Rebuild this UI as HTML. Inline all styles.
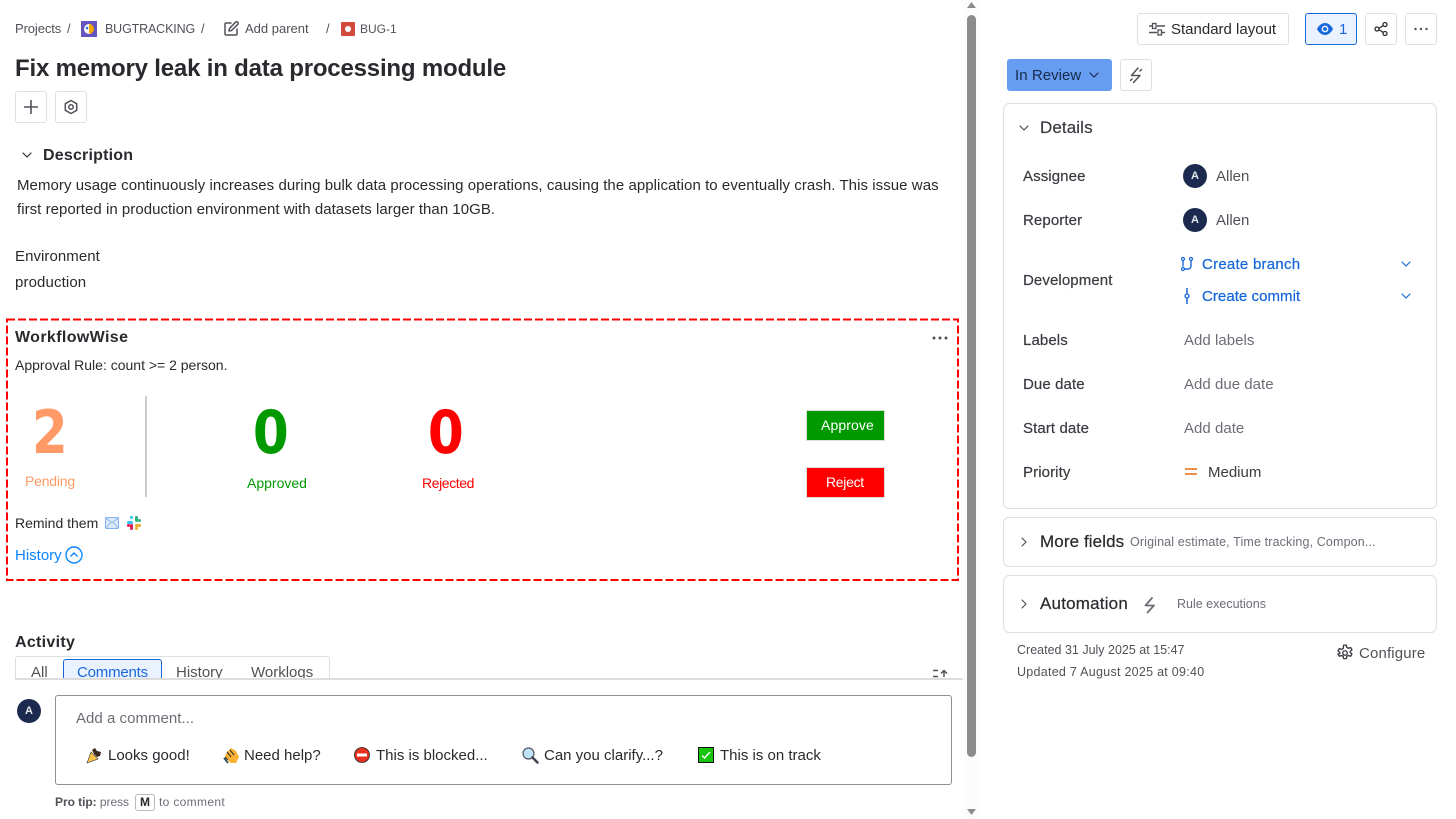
<!DOCTYPE html>
<html lang="en"><head><meta charset="utf-8"><title>BUG-1</title>
<style>
html,body{margin:0;padding:0;background:#fff;width:1456px;height:819px;overflow:hidden}
body{position:relative;font-family:"Liberation Sans",sans-serif;color:#292a2e}
.t{position:absolute;white-space:nowrap;line-height:20px;height:20px;font-size:15px;letter-spacing:0;margin-top:1px}
.t.bc,.t.h,.t.w,.t.d,.t.k,.t[style*="font-size"]{margin-top:0}
.b{position:absolute;box-sizing:border-box;border:1px solid #dcdfe4;border-radius:3px;background:#fff}
.p{position:absolute;box-sizing:border-box;border:1px solid #dcdfe4;border-radius:6px;background:#fff}
svg{position:absolute;overflow:visible}
.s{fill:none;stroke:#505258;stroke-width:1.5;stroke-linecap:round;stroke-linejoin:round}
.bc{font-size:13px;color:#505258}
.h{font-weight:bold;font-size:16px;letter-spacing:.2px}
.l{color:#3a3c42;letter-spacing:.1px;-webkit-text-stroke:.2px #3a3c42}
.g{color:#6b6e76;letter-spacing:.03px}
.a{position:absolute;border-radius:50%;background:#1b2a4e;color:#e6e8ee;text-align:center;font-weight:bold;font-size:11px;line-height:25px}
.u{color:#1868db;-webkit-text-stroke:.25px #1868db}
.k{font-size:17px;letter-spacing:.1px;-webkit-text-stroke:.2px #292a2e}
.w{font-size:14px}
.d{font-family:"DejaVu Sans",sans-serif;font-weight:bold;font-size:60px;line-height:70px;height:70px;transform:scaleX(.86);transform-origin:center}
</style></head><body>

<!-- breadcrumbs -->
<div class="t bc" style="left:15px;top:19px;letter-spacing:-.1px">Projects</div>
<div class="t bc" style="left:67px;top:19px">/</div>
<svg style="left:81px;top:21px" width="16" height="16"><rect width="16" height="16" fill="#6554c0"/><path d="M3 8a5 5 0 0 1 5-5h2v10H8a5 5 0 0 1-5-5z" fill="#fff"/><path d="M8 3a5 5 0 0 1 5 5 5 5 0 0 1-5 5z" fill="#f5a800"/><circle cx="6" cy="7" r="1.300" fill="#2a6ad8"/></svg>
<div class="t bc" style="left:105px;top:19px;font-size:12.5px;letter-spacing:-.15px">BUGTRACKING</div>
<div class="t bc" style="left:201px;top:19px">/</div>
<svg style="left:224px;top:21px" width="15" height="15" viewBox="0 0 15 15"><path class="s" d="M7 2H2.200C1.500 2 1 2.500 1 3.200v9.600c0 .7.5 1.200 1.200 1.200h9.600c.7 0 1.200-.5 1.200-1.200V8M5.500 7.500L11.500 1.200a1.200 1.200 0 0 1 2.300 2.200L7.500 9.500l-2.500.5z"/></svg>
<div class="t bc" style="left:245px;top:19px">Add parent</div>
<div class="t bc" style="left:326px;top:19px">/</div>
<svg style="left:341px;top:22px" width="14" height="14"><rect width="14" height="14" rx="1" fill="#d24a3c"/><circle cx="7" cy="7" r="3" fill="#fff"/></svg>
<div class="t bc" style="left:360px;top:19px;font-size:12px">BUG-1</div>

<div class="t" style="left:15px;top:54px;height:30px;line-height:30px;font-size:24px;font-weight:bold;letter-spacing:-.19px">Fix memory leak in data processing module</div>

<div class="b" style="left:15px;top:91px;width:32px;height:32px"></div>
<svg style="left:24px;top:100px" width="14" height="14"><path d="M7 0v14M0 7h14" stroke="#505258" stroke-width="1.600"/></svg>
<div class="b" style="left:55px;top:91px;width:32px;height:32px"></div>
<svg style="left:63px;top:99px" width="16" height="16"><path class="s" d="M8 1.500l5.700 3.200v6.600L8 14.500l-5.700-3.200V4.700z"/><circle class="s" cx="8" cy="8" r="2.200"/></svg>

<!-- description -->
<svg style="left:22px;top:152px" width="10" height="6"><path class="s" style="stroke:#292a2e;stroke-width:1.200" d="M1 1l4 4 4-4"/></svg>
<div class="t h" style="left:43px;top:146px">Description</div>
<div class="t" style="left:17px;top:175px;letter-spacing:.06px">Memory usage continuously increases during bulk data processing operations, causing the application to eventually crash. This issue was</div>
<div class="t" style="left:17px;top:199px;letter-spacing:.04px">first reported in production environment with datasets larger than 10GB.</div>
<div class="t" style="left:15px;top:246px;letter-spacing:.06px">Environment</div>
<div class="t" style="left:15px;top:272px;letter-spacing:.12px">production</div>

<!-- widget -->
<svg style="left:0;top:0" width="970" height="590"><rect x="7" y="319.500" width="951" height="260.500" fill="none" stroke="#ff0000" stroke-width="2" stroke-dasharray="8 3"/></svg>
<div class="t h" style="left:15px;top:328px;letter-spacing:.37px">WorkflowWise</div>
<svg style="left:932px;top:336px" width="16" height="4"><circle cx="2" cy="2" r="1.500" fill="#505258"/><circle cx="8" cy="2" r="1.500" fill="#505258"/><circle cx="14" cy="2" r="1.500" fill="#505258"/></svg>
<div class="t w" style="left:15px;top:355px">Approval Rule: count &gt;= 2 person.</div>

<div class="t d" style="left:29px;top:398px;color:#ff9966">2</div>
<div class="t" style="left:25px;top:471px;font-size:14px;color:#ff9966;letter-spacing:-.2px">Pending</div>
<div style="position:absolute;left:145px;top:396px;width:2px;height:101px;background:#ccc"></div>
<div class="t d" style="left:250px;top:398px;color:#009900">0</div>
<div class="t" style="left:247px;top:473px;font-size:14px;color:#009900">Approved</div>
<div class="t d" style="left:425px;top:398px;color:#ff0000">0</div>
<div class="t" style="left:422px;top:473px;font-size:14px;color:#ff0000;letter-spacing:-.4px">Rejected</div>
<div style="position:absolute;left:806px;top:410px;width:77px;height:29px;border:1px solid #ddd;background:#009900"></div>
<div class="t w" style="left:821px;top:415px;color:#fff;letter-spacing:.1px">Approve</div>
<div style="position:absolute;left:806px;top:467px;width:77px;height:29px;border:1px solid #ddd;background:#ff0000"></div>
<div class="t w" style="left:826px;top:472px;color:#fff;letter-spacing:-.3px">Reject</div>

<div class="t w" style="left:15px;top:513px">Remind them</div>
<svg style="left:105px;top:517px" width="14" height="12"><rect x=".5" y=".5" width="13" height="11" rx="1" fill="#dbe9fb" stroke="#7fb2ef"/><path d="M1 1l6 5 6-5M1 11l4-5M13 11L9 6" fill="none" stroke="#7fb2ef" stroke-width=".9"/></svg>
<svg style="left:127px;top:516px" width="14" height="14"><rect x="0" y="5" width="6" height="3" rx="1.500" fill="#36c5f0"/><rect x="3" y="0" width="3" height="3" rx="1.200" fill="#36c5f0"/><rect x="8" y="0" width="3" height="6" rx="1.500" fill="#2eb67d"/><rect x="11" y="3" width="3" height="3" rx="1.200" fill="#2eb67d"/><rect x="8" y="8" width="6" height="3" rx="1.500" fill="#ecb22e"/><rect x="8" y="11" width="3" height="3" rx="1.200" fill="#ecb22e"/><rect x="3" y="8" width="3" height="6" rx="1.500" fill="#e01e5a"/><rect x="0" y="8" width="3" height="3" rx="1.200" fill="#e01e5a"/></svg>
<div class="t" style="left:15px;top:545px;color:#0a84ff">History</div>
<svg style="left:65px;top:546px" width="18" height="18"><circle cx="9" cy="9" r="8" fill="none" stroke="#0a84ff" stroke-width="1.400"/><path d="M5.500 10.500L9 7l3.500 3.500" fill="none" stroke="#0a84ff" stroke-width="1.400"/></svg>

<!-- activity -->
<div class="t h" style="left:15px;top:633px;letter-spacing:.3px">Activity</div>
<div style="position:absolute;left:15px;top:656px;width:313px;height:24px;border:1px solid #dcdfe4;border-bottom:0;border-radius:3px 3px 0 0"></div>
<div style="position:absolute;left:63px;top:659px;width:97px;height:21px;border:1px solid #1868db;border-bottom:0;border-radius:3px 3px 0 0;background:#e9f2fe"></div>
<div class="t" style="left:31px;top:662px;color:#505258">All</div>
<div class="t" style="left:77px;top:662px;color:#1868db;letter-spacing:-.2px">Comments</div>
<div class="t" style="left:176px;top:662px;color:#505258">History</div>
<div class="t" style="left:251px;top:662px;color:#505258">Worklogs</div>
<svg style="left:933px;top:669px" width="16" height="9"><path d="M0 1.500h5M0 7.500h5M11 8V2M8 4.500L11 1.500l3 3" fill="none" stroke="#505258" stroke-width="1.500"/></svg>
<div style="position:absolute;left:0;top:679px;width:963px;height:40px;background:#fff"></div>
<div style="position:absolute;left:15px;top:678px;width:948px;height:2px;background:#dddddd"></div>

<div class="a" style="left:17px;top:699px;width:24px;height:24px">A</div>
<div class="b" style="left:55px;top:695px;width:897px;height:90px;border-color:#8c8f97"></div>
<div class="t g" style="left:76px;top:708px">Add a comment...</div>

<svg style="left:86px;top:747px" width="17" height="17"><path d="M1 16L5 5l7 7z" fill="#f7c548" stroke="#333" stroke-width=".6"/><path d="M6 3l3-2 2 3 4 1-1 4-3 1-3-3z" fill="#3c2a1e"/></svg>
<div class="t" style="left:108px;top:745px">Looks good!</div>
<svg style="left:224px;top:747px" width="16" height="17"><path d="M3 5l4-4 5 3 3 6-3 6H7L3 13 1 9z" fill="#f9b234"/><path d="M3 5l4 5M6 3l4 5M1 10l3 3" stroke="#333" fill="none" stroke-width="1.100"/><path d="M0 11l4 5" stroke="#2b4a5e" stroke-width="1.800"/></svg>
<div class="t" style="left:244px;top:745px">Need help?</div>
<svg style="left:354px;top:747px" width="16" height="16"><circle cx="8" cy="8" r="7.500" fill="#e8321f" stroke="#222" stroke-width=".8"/><rect x="3" y="6.500" width="10" height="3" fill="#fff"/></svg>
<div class="t" style="left:376px;top:745px">This is blocked...</div>
<svg style="left:522px;top:747px" width="17" height="17"><circle cx="6.500" cy="6.500" r="5.500" fill="#bfe3f7" stroke="#556" stroke-width="1.200"/><path d="M10.500 10.500L15.500 15.500" stroke="#445" stroke-width="2.600" stroke-linecap="round"/></svg>
<div class="t" style="left:544px;top:745px">Can you clarify...?</div>
<svg style="left:698px;top:747px" width="16" height="16"><rect x=".5" y=".5" width="15" height="15" fill="#16c60c" stroke="#111"/><path d="M4 8.500l2.500 2.500L12 5" fill="none" stroke="#fff" stroke-width="1.400"/></svg>
<div class="t" style="left:720px;top:745px">This is on track</div>

<div class="t g" style="left:55px;top:792px;font-size:12px;letter-spacing:-.05px"><b style="color:#505258">Pro tip:</b> press</div>
<div class="b" style="left:135px;top:794px;width:20px;height:17px;border-color:#b7b9be;text-align:center;font-size:12px;line-height:15px;font-weight:bold;color:#292a2e">M</div>
<div class="t g" style="left:159px;top:792px;font-size:12px;letter-spacing:.33px">to comment</div>

<!-- scrollbar -->
<div style="position:absolute;left:964px;top:0;width:15px;height:819px;background:#fcfcfc"></div>
<div style="position:absolute;left:967px;top:15px;width:9px;height:742px;border-radius:5px;background:#8c8c8c"></div>
<svg style="left:967px;top:2px" width="9" height="6"><path d="M4.500 0L9 6H0z" fill="#8c8c8c"/></svg>
<svg style="left:967px;top:809px" width="9" height="6"><path d="M0 0h9L4.500 6z" fill="#8c8c8c"/></svg>

<!-- right top -->
<div class="b" style="left:1137px;top:13px;width:152px;height:32px"></div>
<svg style="left:1149px;top:21px" width="16" height="16"><path d="M0 5h3M8 5h8M0 11.500h8M13 11.500h3" fill="none" stroke="#505258" stroke-width="1.400"/><rect x="3.500" y="2.500" width="3.500" height="5" fill="none" stroke="#505258" stroke-width="1.300"/><rect x="9" y="9" width="3.500" height="5" fill="none" stroke="#505258" stroke-width="1.300"/></svg>
<div class="t" style="left:1171px;top:19px">Standard layout</div>
<div class="b" style="left:1305px;top:13px;width:52px;height:32px;background:#e9f2fe;border-color:#1868db"></div>
<svg style="left:1317px;top:22px" width="16" height="14"><path d="M0 7c2-4 5-6 8-6s6 2 8 6c-2 4-5 6-8 6s-6-2-8-6z" fill="#1868db"/><circle cx="8" cy="7" r="3.400" fill="#e9f2fe"/><circle cx="8" cy="7" r="1.900" fill="#1868db"/></svg>
<div class="t" style="left:1339px;top:19px;color:#1868db">1</div>
<div class="b" style="left:1365px;top:13px;width:32px;height:32px"></div>
<svg style="left:1374px;top:22px" width="14" height="14"><path d="M4 7l6-4M4 7l6 4" stroke="#292a2e" stroke-width="1.300"/><circle cx="3" cy="7" r="2" fill="#fff" stroke="#292a2e" stroke-width="1.300"/><circle cx="11" cy="2.500" r="2" fill="#fff" stroke="#292a2e" stroke-width="1.300"/><circle cx="11" cy="11.500" r="2" fill="#fff" stroke="#292a2e" stroke-width="1.300"/></svg>
<div class="b" style="left:1405px;top:13px;width:32px;height:32px"></div>
<svg style="left:1413px;top:27px" width="16" height="4"><circle cx="2.500" cy="2" r="1.200" fill="#505258"/><circle cx="8" cy="2" r="1.200" fill="#505258"/><circle cx="13.500" cy="2" r="1.200" fill="#505258"/></svg>

<div style="position:absolute;left:1007px;top:59px;width:105px;height:32px;background:#669df1;border-radius:3px"></div>
<div class="t" style="left:1015px;top:65px;color:#172b4d;letter-spacing:.05px">In Review</div>
<svg style="left:1089px;top:72px" width="10" height="6"><path class="s" style="stroke:#172b4d;stroke-width:1.200" d="M1 1l4 4 4-4"/></svg>
<div class="b" style="left:1120px;top:59px;width:32px;height:32px"></div>
<svg style="left:1129px;top:67px" width="14" height="16" viewBox="0 0 14 16"><path class="s" d="M9 1L2.500 8.500H11L4.500 15.500M1.500 13.500L3 12M12.500 2.500L11 4"/></svg>

<!-- details -->
<div class="p" style="left:1003px;top:103px;width:434px;height:406px"></div>
<svg style="left:1019px;top:125px" width="10" height="6"><path class="s" style="stroke-width:1.200" d="M1 1l4 4 4-4"/></svg>
<div class="t k" style="left:1040px;top:118px;color:#3a3c42;-webkit-text-stroke:.2px #3a3c42">Details</div>

<div class="t l" style="left:1023px;top:166px">Assignee</div>
<div class="a" style="left:1183px;top:164px;width:24px;height:24px">A</div>
<div class="t" style="left:1216px;top:166px;color:#505258">Allen</div>
<div class="t l" style="left:1023px;top:210px">Reporter</div>
<div class="a" style="left:1183px;top:208px;width:24px;height:24px">A</div>
<div class="t" style="left:1216px;top:210px;color:#505258">Allen</div>
<div class="t l" style="left:1023px;top:270px">Development</div>

<svg style="left:1180px;top:257px" width="14" height="14"><path d="M3 3.500v6M11 3.500V9a3 3 0 0 1-3 3H5" fill="none" stroke="#1868db" stroke-width="1.400"/><circle cx="3" cy="2" r="1.500" fill="none" stroke="#1868db" stroke-width="1.200"/><circle cx="11" cy="2" r="1.500" fill="none" stroke="#1868db" stroke-width="1.200"/><circle cx="3" cy="12" r="1.500" fill="none" stroke="#1868db" stroke-width="1.200"/></svg>
<div class="t u" style="left:1202px;top:254px;letter-spacing:.25px">Create branch</div>
<svg style="left:1401px;top:261px" width="10" height="6"><path class="s" style="stroke:#1868db;stroke-width:1.200" d="M1 1l4 4 4-4"/></svg>
<svg style="left:1184px;top:288px" width="6" height="16"><path d="M3 0v5.500M3 10.500V16" stroke="#1868db" stroke-width="1.500"/><circle cx="3" cy="8" r="2" fill="none" stroke="#1868db" stroke-width="1.300"/></svg>
<div class="t u" style="left:1202px;top:286px;letter-spacing:.05px">Create commit</div>
<svg style="left:1401px;top:293px" width="10" height="6"><path class="s" style="stroke:#1868db;stroke-width:1.200" d="M1 1l4 4 4-4"/></svg>

<div class="t l" style="left:1023px;top:330px">Labels</div>
<div class="t g" style="left:1184px;top:330px">Add labels</div>
<div class="t l" style="left:1023px;top:374px">Due date</div>
<div class="t g" style="left:1184px;top:374px">Add due date</div>
<div class="t l" style="left:1023px;top:418px">Start date</div>
<div class="t g" style="left:1184px;top:418px">Add date</div>
<div class="t l" style="left:1023px;top:462px">Priority</div>
<svg style="left:1185px;top:468px" width="12" height="7"><path d="M0 1h12M0 6h12" stroke="#e56910" stroke-width="1.500"/></svg>
<div class="t" style="left:1208px;top:462px;color:#3a3c42">Medium</div>

<!-- more fields -->
<div class="p" style="left:1003px;top:517px;width:434px;height:50px"></div>
<svg style="left:1021px;top:537px" width="6" height="10"><path class="s" style="stroke-width:1.200" d="M1 1l4 4-4 4"/></svg>
<div class="t k" style="left:1040px;top:532px">More fields</div>
<div class="t g" style="left:1130px;top:532px;font-size:12.5px;letter-spacing:.14px">Original estimate, Time tracking, Compon...</div>

<div class="p" style="left:1003px;top:575px;width:434px;height:58px"></div>
<svg style="left:1021px;top:599px" width="6" height="10"><path class="s" style="stroke-width:1.200" d="M1 1l4 4-4 4"/></svg>
<div class="t k" style="left:1040px;top:594px;letter-spacing:.2px">Automation</div>
<svg style="left:1143px;top:597px" width="14" height="16" viewBox="0 0 14 16"><path class="s" style="stroke:#6b6e76;stroke-width:1.800" d="M9 1L2.500 8.500H11L4.500 15.500"/></svg>
<div class="t g" style="left:1177px;top:594px;font-size:12.5px;letter-spacing:0">Rule executions</div>

<div class="t" style="left:1017px;top:640px;font-size:12.5px;color:#505258">Created 31 July 2025 at 15:47</div>
<div class="t" style="left:1017px;top:662px;font-size:12.5px;color:#505258;letter-spacing:.27px">Updated 7 August 2025 at 09:40</div>
<svg style="left:1336px;top:644px" width="18" height="18" viewBox="0 0 16 16"><path class="s" style="stroke-width:1.200;stroke:#3a3c42" d="M6.800 1h2.400l.4 2 1.500.8 1.900-.7 1.200 2-1.500 1.300v1.200l1.500 1.300-1.200 2-1.900-.7-1.500.8-.4 2H6.800l-.4-2-1.500-.8-1.900.7-1.200-2L3.300 8.600V7.400L1.800 6.100l1.200-2 1.900.7 1.500-.8z"/><circle class="s" style="stroke-width:1.200;stroke:#3a3c42" cx="8" cy="8" r="2"/></svg>
<div class="t" style="left:1359px;top:643px;color:#505258;letter-spacing:.15px">Configure</div>

</body></html>
